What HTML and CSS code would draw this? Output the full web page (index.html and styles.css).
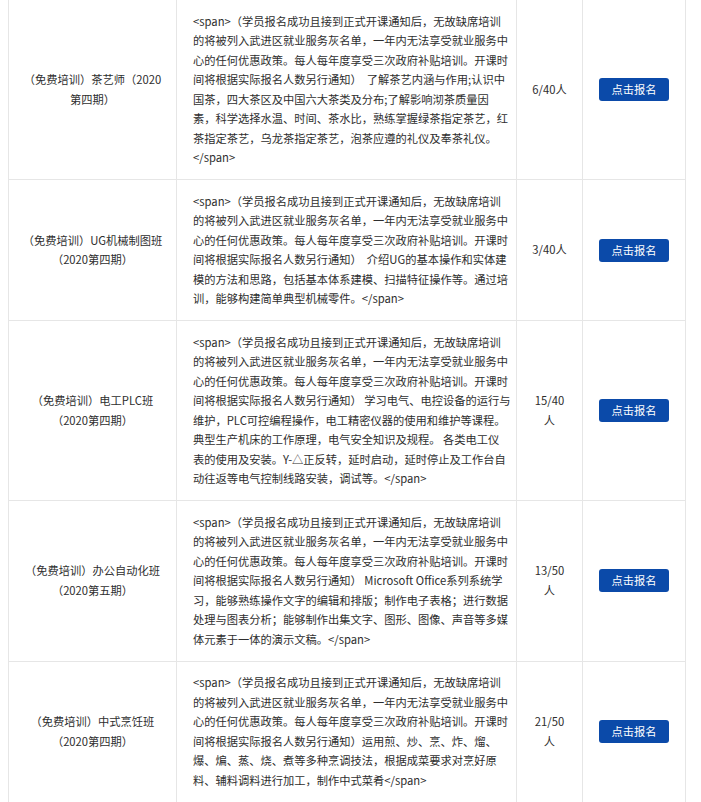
FILE: index.html
```html
<!DOCTYPE html>
<html lang="zh-CN">
<head>
<meta charset="utf-8">
<title>培训报名</title>
<link rel="stylesheet" href="styles.css">
</head>
<body>
<div class="page">
<table class="course-table">
  <colgroup>
    <col class="col-name">
    <col class="col-desc">
    <col class="col-count">
    <col class="col-action">
  </colgroup>
  <tbody>
    <tr>
      <td class="name">（免费培训）茶艺师（2020<br>第四期）</td>
      <td class="desc">&lt;span&gt;（学员报名成功且接到正式开课通知后，无故缺席培训<br>的将被列入武进区就业服务灰名单，一年内无法享受就业服务中<br>心的任何优惠政策。每人每年度享受三次政府补贴培训。开课时<br>间将根据实际报名人数另行通知）&nbsp; 了解茶艺内涵与作用;认识中<br>国茶，四大茶区及中国六大茶类及分布;了解影响沏茶质量因<br>素，科学选择水温、时间、茶水比，熟练掌握绿茶指定茶艺，红<br>茶指定茶艺，乌龙茶指定茶艺，泡茶应遵的礼仪及奉茶礼仪。<br>&lt;/span&gt;</td>
      <td class="count">6/40人</td>
      <td class="action"><button class="btn" type="button">点击报名</button></td>
    </tr>
    <tr>
      <td class="name">（免费培训）UG机械制图班<br>（2020第四期）</td>
      <td class="desc">&lt;span&gt;（学员报名成功且接到正式开课通知后，无故缺席培训<br>的将被列入武进区就业服务灰名单，一年内无法享受就业服务中<br>心的任何优惠政策。每人每年度享受三次政府补贴培训。开课时<br>间将根据实际报名人数另行通知）&nbsp; 介绍UG的基本操作和实体建<br>模的方法和思路，包括基本体系建模、扫描特征操作等。通过培<br>训，能够构建简单典型机械零件。&lt;/span&gt;</td>
      <td class="count">3/40人</td>
      <td class="action"><button class="btn" type="button">点击报名</button></td>
    </tr>
    <tr>
      <td class="name">（免费培训）电工PLC班<br>（2020第四期）</td>
      <td class="desc">&lt;span&gt;（学员报名成功且接到正式开课通知后，无故缺席培训<br>的将被列入武进区就业服务灰名单，一年内无法享受就业服务中<br>心的任何优惠政策。每人每年度享受三次政府补贴培训。开课时<br>间将根据实际报名人数另行通知） 学习电气、电控设备的运行与<br>维护，PLC可控编程操作，电工精密仪器的使用和维护等课程。<br>典型生产机床的工作原理，电气安全知识及规程。 各类电工仪<br>表的使用及安装。Y-△正反转，延时启动，延时停止及工作台自<br>动往返等电气控制线路安装，调试等。&lt;/span&gt;</td>
      <td class="count">15/40<br>人</td>
      <td class="action"><button class="btn" type="button">点击报名</button></td>
    </tr>
    <tr>
      <td class="name">（免费培训）办公自动化班<br>（2020第五期）</td>
      <td class="desc">&lt;span&gt;（学员报名成功且接到正式开课通知后，无故缺席培训<br>的将被列入武进区就业服务灰名单，一年内无法享受就业服务中<br>心的任何优惠政策。每人每年度享受三次政府补贴培训。开课时<br>间将根据实际报名人数另行通知） Microsoft Office系列系统学<br>习，能够熟练操作文字的编辑和排版；制作电子表格；进行数据<br>处理与图表分析；能够制作出集文字、图形、图像、声音等多媒<br>体元素于一体的演示文稿。&lt;/span&gt;</td>
      <td class="count">13/50<br>人</td>
      <td class="action"><button class="btn" type="button">点击报名</button></td>
    </tr>
    <tr>
      <td class="name">（免费培训）中式烹饪班<br>（2020第四期）</td>
      <td class="desc">&lt;span&gt;（学员报名成功且接到正式开课通知后，无故缺席培训<br>的将被列入武进区就业服务灰名单，一年内无法享受就业服务中<br>心的任何优惠政策。每人每年度享受三次政府补贴培训。开课时<br>间将根据实际报名人数另行通知）运用煎、炒、烹、炸、熘、<br>爆、煸、蒸、烧、煮等多种烹调技法，根据成菜要求对烹好原<br>料、辅料调料进行加工，制作中式菜肴&lt;/span&gt;</td>
      <td class="count">21/50<br>人</td>
      <td class="action"><button class="btn" type="button">点击报名</button></td>
    </tr>
  </tbody>
</table>
</div>
</body>
</html>
```

FILE: styles.css
```css
html, body {
  margin: 0;
  padding: 0;
  background: #ffffff;
}

body {
  font-family: "Noto Sans CJK SC", "Noto Sans", sans-serif;
  font-size: 11.25px;
  line-height: 19.5px;
  color: #2e2e2e;
}

.page {
  padding: 0 8px;
}

.course-table {
  border-collapse: collapse;
  table-layout: fixed;
  width: 677px;
}

.col-name { width: 168px; }
.col-desc { width: 340px; }
.col-count { width: 66px; }
.col-action { width: 103px; }

.course-table td {
  border: 1px solid #e6e6e6;
  padding: 11.5px 16px;
  vertical-align: middle;
}

.course-table tr:first-child td {
  border-top: 0;
}

.course-table td.name {
  text-align: center;
  white-space: nowrap;
  padding-left: 10px;
  padding-right: 10px;
}

.desc {
  text-align: left;
  white-space: nowrap;
}

.course-table td.count {
  text-align: center;
  padding-left: 10px;
  padding-right: 10px;
  white-space: nowrap;
}

.action {
  text-align: center;
}

.btn {
  display: inline-block;
  width: 70px;
  height: 23px;
  padding: 0;
  border: 0;
  border-radius: 3px;
  background: #0b4aa9;
  color: #ffffff;
  font-family: "Noto Sans CJK SC", "Noto Sans", sans-serif;
  font-size: 11.25px;
  line-height: 23px;
  cursor: pointer;
}
```
